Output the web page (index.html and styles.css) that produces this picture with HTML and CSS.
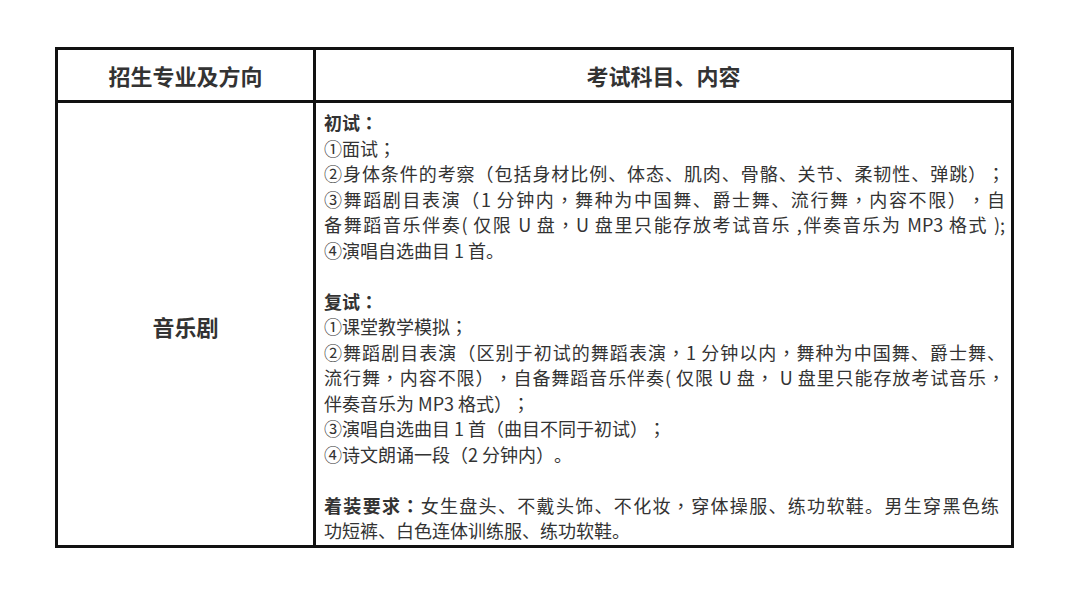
FILE: index.html
```html
<!DOCTYPE html>
<html lang="zh-CN">
<head>
<meta charset="utf-8">
<title>招生专业及方向</title>
<link rel="stylesheet" href="styles.css">
</head>
<body>
<div class="table">
  <div class="cell head">招生专业及方向</div>
  <div class="cell head">考试科目、内容</div>
  <div class="cell major">音乐剧</div>
  <div class="cell content">
    <div class="line"><b>初试<span class="p" lang="zh-TW">：</span></b></div>
    <div class="line">①面试<span class="p" lang="zh-TW">；</span></div>
    <div class="line j">②身体条件的考察<span class="p" lang="zh-TW">（</span>包括身材比例、体态、肌肉、骨骼、关节、柔韧性、弹跳<span class="p" lang="zh-TW">）；</span></div>
    <div class="line j">③舞蹈剧目表演<span class="p" lang="zh-TW">（</span>1 分钟内<span class="p" lang="zh-TW">，</span>舞种为中国舞、爵士舞、流行舞<span class="p" lang="zh-TW">，</span>内容不限<span class="p" lang="zh-TW">），</span>自</div>
    <div class="line j">备舞蹈音乐伴奏( 仅限 U 盘<span class="p" lang="zh-TW">，</span>U 盘里只能存放考试音乐 ,伴奏音乐为 MP3 格式 );</div>
    <div class="line">④演唱自选曲目 1 首。</div>
    <div class="line">&nbsp;</div>
    <div class="line"><b>复试<span class="p" lang="zh-TW">：</span></b></div>
    <div class="line">①课堂教学模拟<span class="p" lang="zh-TW">；</span></div>
    <div class="line j">②舞蹈剧目表演<span class="p" lang="zh-TW">（</span>区别于初试的舞蹈表演<span class="p" lang="zh-TW">，</span>1 分钟以内<span class="p" lang="zh-TW">，</span>舞种为中国舞、爵士舞、</div>
    <div class="line j">流行舞<span class="p" lang="zh-TW">，</span>内容不限<span class="p" lang="zh-TW">），</span>自备舞蹈音乐伴奏( 仅限 U 盘<span class="p" lang="zh-TW">，</span> U 盘里只能存放考试音乐<span class="p" lang="zh-TW">，</span></div>
    <div class="line">伴奏音乐为 MP3 格式<span class="p" lang="zh-TW">）；</span></div>
    <div class="line">③演唱自选曲目 1 首<span class="p" lang="zh-TW">（</span>曲目不同于初试<span class="p" lang="zh-TW">）；</span></div>
    <div class="line">④诗文朗诵一段<span class="p" lang="zh-TW">（</span>2 分钟内<span class="p" lang="zh-TW">）</span>。</div>
    <div class="line">&nbsp;</div>
    <div class="line j s"><b>着装要求<span class="p" lang="zh-TW">：</span></b>女生盘头、不戴头饰、不化妆<span class="p" lang="zh-TW">，</span>穿体操服、练功软鞋。男生穿黑色练</div>
    <div class="line">功短裤、白色连体训练服、练功软鞋。</div>
  </div>
</div>
</body>
</html>
```
FILE: styles.css
```css
html, body {
  margin: 0;
  padding: 0;
  background: #ffffff;
}
body {
  font-family: "Noto Sans CJK SC", "Microsoft YaHei", "Noto Sans", sans-serif;
  color: #333333;
  text-spacing-trim: space-all;
  font-kerning: none;
}
.table {
  margin: 47px 0 0 55px;
  width: 959px;
  box-sizing: border-box;
  padding: 3px;
  background: #111111;
  display: grid;
  grid-template-columns: 255px 695px;
  grid-template-rows: 50px 442px;
  gap: 3px;
}
.cell {
  background: #ffffff;
}
.head, .major {
  display: flex;
  align-items: center;
  justify-content: center;
  font-size: 22px;
  font-weight: 700;
  color: #333333;
}
.major {
  padding-top: 3px;
  box-sizing: border-box;
}
.content {
  padding: 7px 6px 0 8px;
  font-size: 18px;
  line-height: 25.5px;
}
.line {
  white-space: nowrap;
}
.line b {
  font-weight: 700;
  color: #333333;
}
.p {
  font-family: "Noto Sans CJK TC", "Noto Sans CJK SC", sans-serif;
}
.j {
  text-align: justify;
  text-align-last: justify;
}
.s {
  padding-right: 6px;
}
```
